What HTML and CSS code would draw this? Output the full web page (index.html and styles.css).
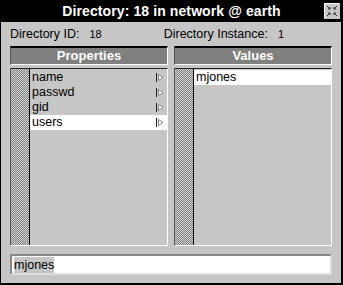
FILE: index.html
```html
<!DOCTYPE html>
<html lang="en">
<head>
  <meta charset="UTF-8">
  <title>Directory</title>
  <link rel="stylesheet" href="styles.css">
</head>
<body>
  <div class="window">
    <div class="titlebar">
      <span></span>
      <span class="title">Directory: 18 in network @ earth</span>
      <span class="close">
        <svg width="16" height="16" viewBox="0 0 16 16">
          <rect x="0" y="0" width="16" height="16" fill="#c6c6c6"/>
          <path d="M0 0H15V1H1V15H0Z" fill="#fff"/>
          <path d="M3 3L6 6M6 4V6H4" stroke="#333" fill="none"/>
          <path d="M13 3L10 6M10 4V6H12" stroke="#333" fill="none"/>
          <path d="M3 13L6 10M6 12V10H4" stroke="#333" fill="none"/>
          <path d="M13 13L10 10M10 12V10H12" stroke="#333" fill="none"/>
        </svg>
      </span>
    </div>

    <div class="info">
      <span class="label">Directory ID:</span><span class="val id">18</span>
      <span class="label inst">Directory Instance:</span><span class="val">1</span>
    </div>

    <div class="columns">
      <div class="column">
        <div class="header">Properties</div>
        <div class="list">
          <div class="stripe"></div>
          <ul class="items">
            <li>name<svg class="arrow" width="8" height="9" viewBox="0 0 8 9"><path d="M0.5 0V9" stroke="#222"/><path d="M2.5 1.5L7 4.5L2.5 7.5Z" fill="#fff" stroke="#888"/></svg></li>
            <li>passwd<svg class="arrow" width="8" height="9" viewBox="0 0 8 9"><path d="M0.5 0V9" stroke="#222"/><path d="M2.5 1.5L7 4.5L2.5 7.5Z" fill="#fff" stroke="#888"/></svg></li>
            <li>gid<svg class="arrow" width="8" height="9" viewBox="0 0 8 9"><path d="M0.5 0V9" stroke="#222"/><path d="M2.5 1.5L7 4.5L2.5 7.5Z" fill="#fff" stroke="#888"/></svg></li>
            <li class="selected">users<svg class="arrow" width="8" height="9" viewBox="0 0 8 9"><path d="M0.5 0V9" stroke="#222"/><path d="M2.5 1.5L7 4.5L2.5 7.5Z" fill="#fff" stroke="#888"/></svg></li>
          </ul>
        </div>
      </div>
      <div class="column">
        <div class="header">Values</div>
        <div class="list">
          <div class="stripe"></div>
          <ul class="items">
            <li class="selected">mjones</li>
          </ul>
        </div>
      </div>
    </div>

    <div class="field"><span class="sel">mjones</span></div>
  </div>
</body>
</html>
```

FILE: styles.css
```css
body {
  margin: 0;
  font-family: "Liberation Sans", Arial, sans-serif;
  font-size: 12px;
  color: #000;
}

.window {
  width: 343px;
  height: 285px;
  box-sizing: border-box;
  background: #c6c6c6;
  border-left: 1px solid #000;
  border-right: 2px solid #000;
  border-bottom: 2px solid #000;
  display: flex;
  flex-direction: column;
}

.titlebar {
  height: 22px;
  background: #000;
  color: #fff;
  display: grid;
  grid-template-columns: 1fr auto 1fr;
  align-items: center;
  margin-left: -1px;
  margin-right: -2px;
}

.title {
  font-weight: bold;
  font-size: 14px;
  letter-spacing: 0.1px;
}

.close {
  justify-self: end;
  margin-right: 3px;
  height: 16px;
}

.info {
  height: 24px;
  display: flex;
  align-items: center;
  padding: 0 9px;
  font-size: 12.5px;
}

.val {
  font-size: 11px;
  margin-left: 10px;
}

.val.id {
  margin-right: 62px;
}

.columns {
  display: flex;
  gap: 6px;
  padding: 0 9px;
  height: 200px;
}

.column {
  flex: 1;
  display: flex;
  flex-direction: column;
  gap: 3px;
}

.header {
  height: 19px;
  box-sizing: border-box;
  background: #808080;
  color: #fff;
  font-weight: bold;
  font-size: 13px;
  text-align: center;
  line-height: 16px;
  border-top: 2px solid #000;
  border-left: 1px solid #555;
  border-right: 1px solid #fff;
  border-bottom: 1px solid #fff;
}

.list {
  flex: 1;
  display: flex;
  box-sizing: border-box;
  border-top: 1px solid #222;
  border-left: 1px solid #555;
  border-right: 1px solid #fff;
  border-bottom: 1px solid #fff;
}

.stripe {
  width: 18px;
  border-right: 1px solid #000;
  background-image: repeating-conic-gradient(#808080 0 25%, #d4d4d4 0 50%);
  background-size: 2px 2px;
}

.items {
  flex: 1;
  list-style: none;
  margin: 0;
  padding: 1px 0 0;
}

.items li {
  height: 15px;
  line-height: 15px;
  padding-left: 2px;
  font-size: 12.5px;
  display: flex;
  align-items: center;
  justify-content: space-between;
}

.items li.selected {
  background: #fff;
}

.arrow {
  margin-right: 3px;
}

.field {
  margin: 8px 9px 0;
  height: 21px;
  box-sizing: border-box;
  background: #fff;
  border-top: 2px solid #888;
  border-left: 2px solid #888;
  border-right: 2px solid #ddd;
  border-bottom: 2px solid #ddd;
  padding-left: 2px;
  display: flex;
  align-items: center;
  font-size: 12.5px;
}

.sel {
  background: #c6c6c6;
  line-height: 16px;
}
```
